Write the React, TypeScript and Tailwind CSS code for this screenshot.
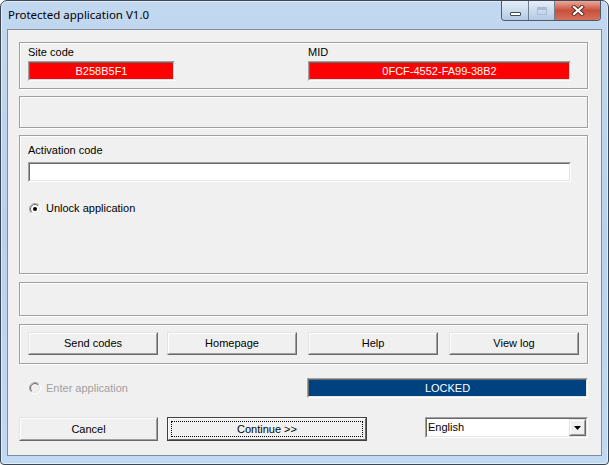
import React from "react";

const F = { fontFamily: '"Liberation Sans", Arial, sans-serif' };

function Raised({ className = "", children }: { className?: string; children?: React.ReactNode }) {
  return (
    <div className={`border border-t-[#e3e3e3] border-l-[#e3e3e3] border-b-[#696969] border-r-[#696969] ${className}`}>
      <div className="h-full w-full border border-t-white border-l-white border-b-[#a0a0a0] border-r-[#a0a0a0] bg-[#f0f0f0] flex items-center justify-center">
        {children}
      </div>
    </div>
  );
}

function Sunken({ className = "", inner = "", children }: { className?: string; inner?: string; children?: React.ReactNode }) {
  return (
    <div className={`border border-t-[#a0a0a0] border-l-[#a0a0a0] border-b-white border-r-white ${className}`}>
      <div className={`h-full w-full border border-t-[#696969] border-l-[#696969] border-b-[#e3e3e3] border-r-[#e3e3e3] ${inner}`}>
        {children}
      </div>
    </div>
  );
}

function Radio({ checked, id }: { checked: boolean; id: string }) {
  return (
    <svg width="12" height="12" viewBox="0 0 12 12">
      <defs>
        <linearGradient id={`o${id}`} x1="0" y1="0" x2="1" y2="1">
          <stop offset="0" stopColor="#a0a0a0" />
          <stop offset="0.5" stopColor="#a0a0a0" />
          <stop offset="0.5" stopColor="#ffffff" />
          <stop offset="1" stopColor="#ffffff" />
        </linearGradient>
        <linearGradient id={`i${id}`} x1="0" y1="0" x2="1" y2="1">
          <stop offset="0" stopColor="#696969" />
          <stop offset="0.5" stopColor="#696969" />
          <stop offset="0.5" stopColor="#e3e3e3" />
          <stop offset="1" stopColor="#e3e3e3" />
        </linearGradient>
      </defs>
      <circle cx="6" cy="6" r="5.5" fill="none" stroke={`url(#o${id})`} strokeWidth="1" />
      <circle cx="6" cy="6" r="4.5" fill={checked ? "#ffffff" : "#f0f0f0"} stroke={`url(#i${id})`} strokeWidth="1" />
      {checked && <circle cx="6" cy="6" r="2" fill="#000" />}
    </svg>
  );
}

function Group({ className = "", children }: { className?: string; children?: React.ReactNode }) {
  return (
    <div className={`w-[569px] border border-[#a0a0a0] shadow-[inset_1px_1px_0_#ffffff,1px_1px_0_#ffffff] ${className}`}>
      {children}
    </div>
  );
}

export default function App() {
  return (
    <div className="w-[609px] h-[465px] bg-white overflow-hidden">
      <div className="relative w-full h-full rounded-t-[7px] rounded-b-[4px] border border-[#3b4754] bg-gradient-to-b from-[#c2d8f0] via-[#b9d1ec] to-[#c1d9f2] shadow-[inset_0_0_0_1px_rgba(255,255,255,0.55)] flex flex-col px-[6px] pb-[8px]">
        {/* Title bar */}
        <div
          className="h-[28px] flex items-center pl-[1px] text-[11.5px] text-black"
          style={{ fontFamily: '"Noto Sans", "Open Sans", sans-serif' }}
        >
          Protected application V1.0
        </div>
        {/* Caption buttons */}
        <div className="absolute top-0 right-[7px] flex h-[20px] border border-t-0 border-[#4e5b6b] rounded-b-[4px] overflow-hidden">
          <div className="w-[27px] h-full bg-gradient-to-b from-[#e6eef8] via-[#ccdcee] to-[#b3c9e3] border-r border-[#6f7f92] flex items-end justify-center pb-[4px]">
            <div className="w-[11px] h-[4px] bg-white border border-[#3e4856] rounded-[1px]" />
          </div>
          <div className="w-[26px] h-full bg-gradient-to-b from-[#e6eef8] via-[#ccdcee] to-[#b3c9e3] border-r border-[#6f7f92] flex items-center justify-center">
            <div className="w-[10px] h-[8px] border border-[#a9bcd3] shadow-[inset_0_2px_0_#a9bcd3]" />
          </div>
          <div className="w-[45px] h-full bg-gradient-to-b from-[#e9a899] via-[#c8503b] to-[#d4705c] flex items-center justify-center">
            <svg width="14" height="11" viewBox="0 0 14 11">
              <path d="M3 2 L11 9 M11 2 L3 9" stroke="#5a2a22" strokeWidth="4" strokeLinecap="square" />
              <path d="M3 2 L11 9 M11 2 L3 9" stroke="#ffffff" strokeWidth="2.2" strokeLinecap="square" />
            </svg>
          </div>
        </div>

        {/* Client area */}
        <div className="flex-1 border border-[#7f8c99] bg-[#f0f0f0] pl-[11px] pt-[12px] flex flex-col text-[11px] text-black" style={F}>
          <Group className="h-[47px] flex">
            <div className="w-[288px] pl-[8px] pt-[3px] flex flex-col">
              <div className="leading-[13px] h-[13px]">Site code</div>
              <Sunken className="mt-[2px] w-[147px] h-[20px]" inner="bg-[#ff0000] flex items-center justify-center text-white">
                B258B5F1
              </Sunken>
            </div>
            <div className="pt-[3px] flex flex-col">
              <div className="leading-[13px] h-[13px]">MID</div>
              <Sunken className="mt-[2px] w-[263px] h-[20px]" inner="bg-[#ff0000] flex items-center justify-center text-white">
                0FCF-4552-FA99-38B2
              </Sunken>
            </div>
          </Group>

          <Group className="mt-[7px] h-[32px]" />

          <Group className="mt-[7px] h-[139px] pl-[8px] pt-[8px] flex flex-col">
            <div className="leading-[13px] h-[13px]">Activation code</div>
            <Sunken className="mt-[5px] w-[543px] h-[20px]" inner="bg-white" />
            <div className="mt-[20px] h-[13px] flex items-center">
              <div className="ml-[1px] w-[12px] h-[12px]">
                <Radio checked id="a" />
              </div>
              <span className="ml-[5px] leading-[13px]">Unlock application</span>
            </div>
          </Group>

          <Group className="mt-[8px] h-[34px]" />

          <Group className="mt-[8px] h-[40px] pl-[8px] pt-[7px] flex items-start">
            <Raised className="w-[130px] h-[23px]">Send codes</Raised>
            <Raised className="ml-[9px] w-[130px] h-[23px]">Homepage</Raised>
            <Raised className="ml-[11px] w-[130px] h-[23px]">Help</Raised>
            <Raised className="ml-[11px] w-[130px] h-[23px]">View log</Raised>
          </Group>

          <div className="mt-[14px] w-[569px] h-[20px] flex items-center">
            <div className="ml-[10px] w-[12px] h-[12px]">
              <Radio checked={false} id="b" />
            </div>
            <span className="ml-[5px] text-[#a0a0a0] leading-[13px]">Enter application</span>
            <Sunken className="ml-auto w-[281px] h-[20px]" inner="bg-[#00417f] flex items-center justify-center text-white">
              LOCKED
            </Sunken>
          </div>

          <div className="mt-[19px] w-[569px] flex items-start">
            <Raised className="w-[139px] h-[24px]">Cancel</Raised>
            <div className="ml-[9px] w-[200px] h-[24px] border border-[#404040]">
              <div className="h-full w-full border border-t-white border-l-white border-b-[#696969] border-r-[#696969] bg-[#f0f0f0] p-[2px]">
                <div className="h-full w-full border border-dotted border-black flex items-center justify-center">
                  Continue &gt;&gt;
                </div>
              </div>
            </div>
            <Sunken className="ml-[58px] w-[163px] h-[21px]" inner="bg-white flex items-center">
              <span className="pl-[1px] flex-1 leading-[13px]">English</span>
              <Raised className="w-[17px] h-full">
                <svg width="7" height="4" viewBox="0 0 7 4">
                  <path d="M0 0 H7 L3.5 4 Z" fill="#000" />
                </svg>
              </Raised>
            </Sunken>
          </div>
        </div>
      </div>
    </div>
  );
}
